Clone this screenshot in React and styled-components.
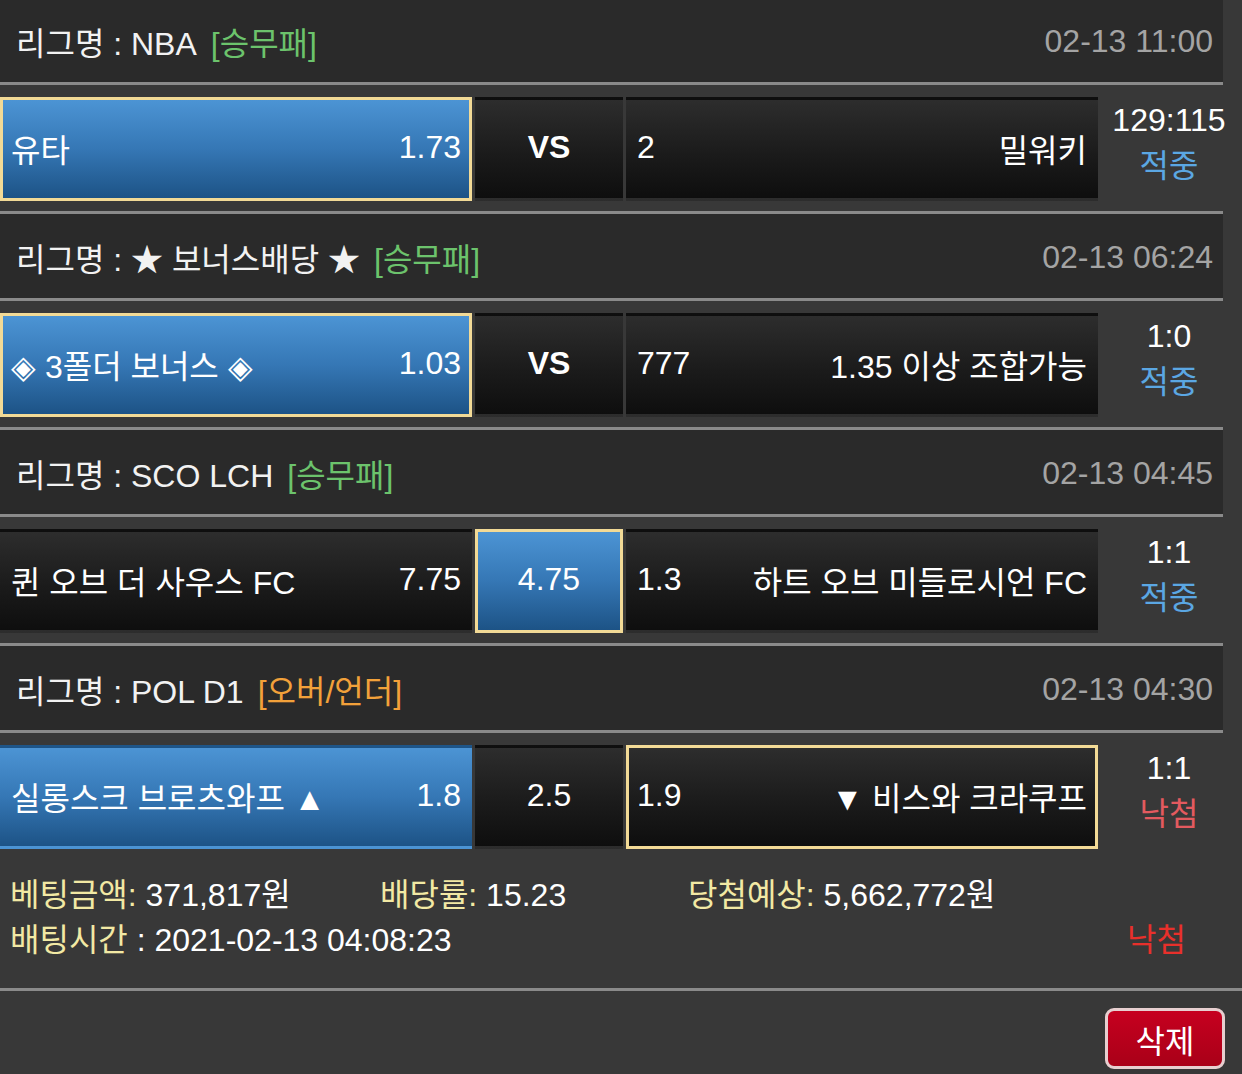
import React from 'react'
import styled, { createGlobalStyle } from 'styled-components'

const GlobalStyle = createGlobalStyle`
  html, body {
    margin: 0;
    padding: 0;
    background: #383838;
  }
  body {
    font-family: "Liberation Sans", "Noto Sans CJK KR", sans-serif;
    color: #fff;
  }
`

const Page = styled.div`
  width: 1242px;
  min-height: 1074px;
  background: #383838;
  overflow: hidden;
`

const List = styled.div`
  width: 1223px;
  margin-top: -2px;
`

const Header = styled.div`
  box-sizing: border-box;
  height: 87px;
  padding: 2px 10px 0 16px;
  display: flex;
  align-items: center;
  justify-content: space-between;
  background: #2a2a2a;
  border-bottom: 3px solid #8a8a8a;
  font-size: 32px;
`

const League = styled.div`
  color: #f2f2f2;
  white-space: nowrap;
`

const Tag = styled.span`
  margin-left: 14px;
  color: ${(p) => (p.$tone === 'orange' ? '#f2a13a' : '#6cc36c')};
`

const Time = styled.div`
  color: #a4a4a4;
`

const MatchRow = styled.div`
  display: grid;
  grid-template-columns: 472px 148px 472px 1fr;
  column-gap: 3px;
  padding: 12px 0 10px;
  border-bottom: ${(p) => (p.$last ? 'none' : '3px solid #8a8a8a')};
`

const Cell = styled.div`
  box-sizing: border-box;
  height: 104px;
  display: flex;
  align-items: center;
  justify-content: ${(p) => (p.$center ? 'center' : 'space-between')};
  padding: 0 8px 3px;
  border: 3px solid ${(p) => (p.$picked ? '#f2da96' : 'transparent')};
  background: ${(p) =>
    p.$active
      ? 'linear-gradient(to bottom, #4c94d4 0%, #3577b5 50%, #1d5386 100%)'
      : 'linear-gradient(to bottom, #2d2d2d 0%, #1b1b1b 55%, #0e0e0e 100%)'};
  font-size: 32px;
  font-weight: ${(p) => (p.$bold ? 700 : 400)};
  color: #fff;
  white-space: nowrap;
`

const ResultBox = styled.div`
  display: flex;
  flex-direction: column;
  align-items: center;
  margin-right: -12px;
  padding-left: 2px;
  font-size: 32px;
  line-height: 46px;
`

const Outcome = styled.span`
  color: ${(p) => (p.$win ? '#5ba7e3' : '#e35a5f')};
`

const Summary = styled.div`
  padding: 14px 0 25px 10px;
  border-bottom: 3px solid #8a8a8a;
  font-size: 32px;
  line-height: 45px;
`

const SummaryLine = styled.div`
  display: grid;
  grid-template-columns: 370px 308px 1fr;
`

const SummaryFoot = styled.div`
  display: flex;
  justify-content: space-between;
  padding-right: 56px;
`

const Label = styled.span`
  color: #f2e9a4;
`

const Lost = styled.span`
  color: #e8302b;
`

const Footer = styled.div`
  display: flex;
  justify-content: flex-end;
  padding: 17px 17px 10px;
`

const DeleteButton = styled.button`
  box-sizing: border-box;
  width: 120px;
  height: 61px;
  border: 3px solid #e7cfd0;
  border-radius: 9px;
  background: linear-gradient(to bottom, #c6001f, #a90018);
  color: #fff;
  font-family: "Liberation Sans", "Noto Sans CJK KR", sans-serif;
  font-size: 32px;
  padding: 0;
  cursor: pointer;
`

const games = [
  {
    league: 'NBA', tag: '[승무패]', tone: 'green', time: '02-13 11:00',
    home: '유타', homeOdds: '1.73', mid: 'VS', awayOdds: '2', away: '밀워키',
    active: 'home', picked: 'home', score: '129:115', result: '적중',
  },
  {
    league: '★ 보너스배당 ★', tag: '[승무패]', tone: 'green', time: '02-13 06:24',
    home: '◈ 3폴더 보너스 ◈', homeOdds: '1.03', mid: 'VS', awayOdds: '777', away: '1.35 이상 조합가능',
    active: 'home', picked: 'home', score: '1:0', result: '적중',
  },
  {
    league: 'SCO LCH', tag: '[승무패]', tone: 'green', time: '02-13 04:45',
    home: '퀸 오브 더 사우스 FC', homeOdds: '7.75', mid: '4.75', awayOdds: '1.3', away: '하트 오브 미들로시언 FC',
    active: 'draw', picked: 'draw', score: '1:1', result: '적중',
  },
  {
    league: 'POL D1', tag: '[오버/언더]', tone: 'orange', time: '02-13 04:30',
    home: '실롱스크 브로츠와프 ▲', homeOdds: '1.8', mid: '2.5', awayOdds: '1.9', away: '▼ 비스와 크라쿠프',
    active: 'home', picked: 'away', score: '1:1', result: '낙첨',
  },
]

const App = () => {
  return (
    <Page>
      <GlobalStyle />
      <List>
        {games.map((g, i) => (
          <React.Fragment key={i}>
            <Header>
              <League>
                리그명 : {g.league}
                <Tag $tone={g.tone}>{g.tag}</Tag>
              </League>
              <Time>{g.time}</Time>
            </Header>
            <MatchRow $last={i === games.length - 1}>
              <Cell $active={g.active === 'home'} $picked={g.picked === 'home'}>
                <span>{g.home}</span>
                <span>{g.homeOdds}</span>
              </Cell>
              <Cell
                $center
                $bold={g.mid === 'VS'}
                $active={g.active === 'draw'}
                $picked={g.picked === 'draw'}
              >
                {g.mid}
              </Cell>
              <Cell $active={g.active === 'away'} $picked={g.picked === 'away'}>
                <span>{g.awayOdds}</span>
                <span>{g.away}</span>
              </Cell>
              <ResultBox>
                <span>{g.score}</span>
                <Outcome $win={g.result === '적중'}>{g.result}</Outcome>
              </ResultBox>
            </MatchRow>
          </React.Fragment>
        ))}
      </List>
      <Summary>
        <SummaryLine>
          <span><Label>베팅금액:</Label> 371,817원</span>
          <span><Label>배당률:</Label> 15.23</span>
          <span><Label>당첨예상:</Label> 5,662,772원</span>
        </SummaryLine>
        <SummaryFoot>
          <span><Label>배팅시간</Label> : 2021-02-13 04:08:23</span>
          <Lost>낙첨</Lost>
        </SummaryFoot>
      </Summary>
      <Footer>
        <DeleteButton>삭제</DeleteButton>
      </Footer>
    </Page>
  )
}

export default App
